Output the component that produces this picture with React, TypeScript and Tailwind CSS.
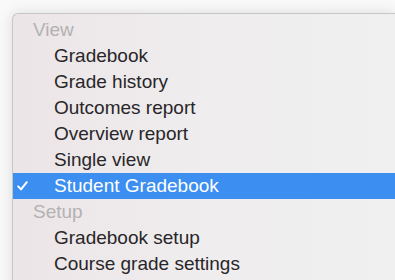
import React from "react";

type Row =
  | { kind: "label"; text: string }
  | { kind: "item"; text: string; selected?: boolean };

const rows: Row[] = [
  { kind: "label", text: "View" },
  { kind: "item", text: "Gradebook" },
  { kind: "item", text: "Grade history" },
  { kind: "item", text: "Outcomes report" },
  { kind: "item", text: "Overview report" },
  { kind: "item", text: "Single view" },
  { kind: "item", text: "Student Gradebook", selected: true },
  { kind: "label", text: "Setup" },
  { kind: "item", text: "Gradebook setup" },
  { kind: "item", text: "Course grade settings" },
];

function Check() {
  return (
    <svg width="11" height="10" viewBox="0 0 11 10" fill="none">
      <path
        d="M1.2 5.4 L4 8.4 L9.8 1.2"
        stroke="white"
        strokeWidth="2"
        strokeLinecap="round"
        strokeLinejoin="round"
      />
    </svg>
  );
}

export default function App() {
  return (
    <div
      className="w-[395px] h-[280px] overflow-hidden bg-[#f9f9f9] pt-[13px] pl-[12px]"
      style={{ fontFamily: '"Liberation Sans", Arial, sans-serif' }}
    >
      <div className="h-[300px] rounded-tl-[6px] border-l border-t border-[#c6c6c6] bg-gradient-to-r from-[#ece5e8] via-[#efedee] to-[#f0f0f0] pt-[3px] shadow-[0_0_14px_rgba(0,0,0,0.12)]">
        {rows.map((r, i) =>
          r.kind === "label" ? (
            <div
              key={i}
              className="h-[26px] flex items-center pl-[20px] text-[19px] text-[#b3b1b2]"
            >
              {r.text}
            </div>
          ) : (
            <div
              key={i}
              className={
                r.selected
                  ? "h-[26px] flex items-center bg-[#3c8ef1] text-white text-[19px]"
                  : "h-[26px] flex items-center text-[#282628] text-[19px]"
              }
            >
              <div className="w-[41px] flex items-center pl-[4px]">
                {r.selected && <Check />}
              </div>
              {r.text}
            </div>
          )
        )}
      </div>
    </div>
  );
}
